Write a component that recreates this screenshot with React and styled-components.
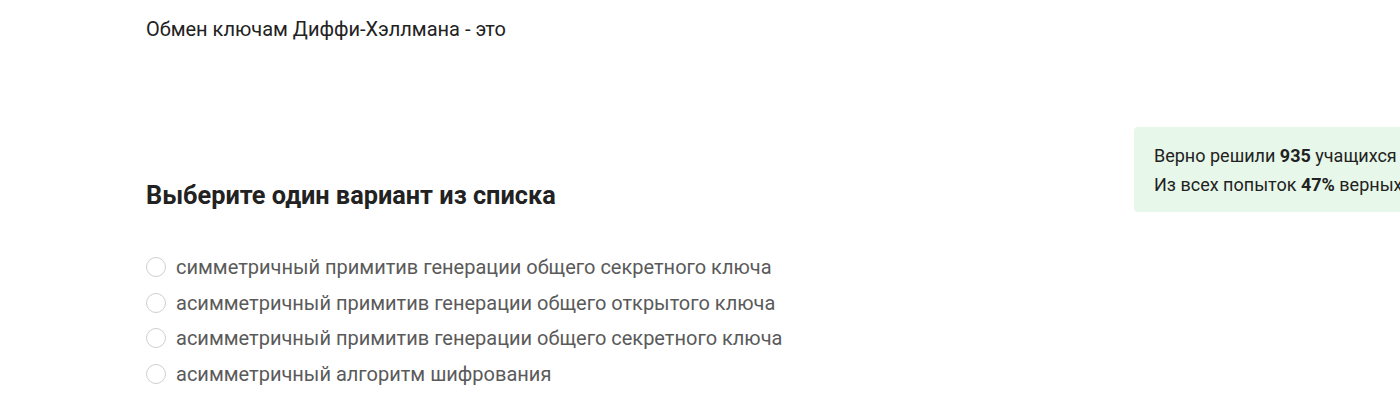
import styled, { createGlobalStyle } from 'styled-components';

const GlobalStyle = createGlobalStyle`
  html, body {
    margin: 0;
    padding: 0;
    background: #ffffff;
    font-family: Roboto, "Liberation Sans", Arial, sans-serif;
    overflow: hidden;
  }
`;

const options = [
  'симметричный примитив генерации общего секретного ключа',
  'асимметричный примитив генерации общего открытого ключа',
  'асимметричный примитив генерации общего секретного ключа',
  'асимметричный алгоритм шифрования',
];

export default function App() {
  return (
    <>
      <GlobalStyle />
      <Page>
        <Main>
          <Question>Обмен ключам Диффи-Хэллмана - это</Question>
          <Heading>Выберите один вариант из списка</Heading>
          <OptionList>
            {options.map((text) => (
              <Option key={text}>
                <Radio type="radio" name="answer" />
                <span>{text}</span>
              </Option>
            ))}
          </OptionList>
        </Main>
        <Aside>
          <Stats>
            <div>Верно решили <b>935</b> учащихся</div>
            <div>Из всех попыток <b>47%</b> верных</div>
          </Stats>
        </Aside>
      </Page>
    </>
  );
}

const Page = styled.div`
  display: grid;
  grid-template-columns: 988px 320px;
  padding-left: 146px;
  width: 1454px;
  height: 408px;
`;

const Main = styled.div`
  display: flex;
  flex-direction: column;
  padding-top: 15px;
`;

const Question = styled.div`
  font-size: 20px;
  line-height: 28px;
  color: #222222;
`;

const Heading = styled.h2`
  margin: 137px 0 0;
  font-size: 25.3px;
  line-height: 32px;
  font-weight: 700;
  color: #222222;
`;

const OptionList = styled.div`
  display: flex;
  flex-direction: column;
  margin-top: 37px;
`;

const Option = styled.label`
  display: flex;
  align-items: center;
  gap: 10px;
  height: 35.7px;
  font-size: 20px;
  color: #5a5a5a;
`;

const Radio = styled.input`
  appearance: none;
  margin: 0;
  width: 20px;
  height: 20px;
  border: 1px solid #cfcfcf;
  border-radius: 50%;
  background: #fff;
  flex-shrink: 0;
`;

const Aside = styled.aside`
  padding-top: 127px;
`;

const Stats = styled.div`
  background: #e7f7e9;
  border-radius: 4px;
  padding: 14px 20px 13px;
  font-size: 18px;
  line-height: 29px;
  color: #222222;
  white-space: nowrap;

  b {
    font-weight: 700;
  }
`;
